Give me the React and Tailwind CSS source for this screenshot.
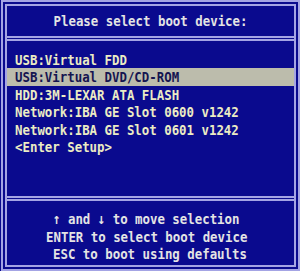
export default function App() {
  const font = { fontFamily: '"DejaVu Sans Mono", "Liberation Mono", monospace' };
  const items = [
    "USB:Virtual FDD",
    "USB:Virtual DVD/CD-ROM",
    "HDD:3M-LEXAR ATA FLASH",
    "Network:IBA GE Slot 0600 v1242",
    "Network:IBA GE Slot 0601 v1242",
    "<Enter Setup>",
  ];
  return (
    <div className="w-[300px] h-[271px] bg-[#0a0a8e] overflow-hidden" style={font}>
      <div className="ml-[1px] w-[299px] h-[271px] border-[6px] border-double border-[#a4a4e4] flex flex-col">
        <div className="h-[30px] flex items-center justify-center text-[12.4px] font-bold text-[#e4e4e4] whitespace-pre">
          <span className="inline-block scale-y-120">Please select boot device:</span>
        </div>
        <div className="h-[5px] border-t-[5px] border-double border-[#a4a4e4]" />
        <div className="h-[155px] pt-[10px] flex flex-col">
          {items.map((t, i) => (
            <div
              key={t}
              className={
                "h-[17.4px] leading-[17.4px] pl-[8px] text-[12.4px] font-bold whitespace-pre " +
                (i === 1 ? "bg-[#bcbcac] text-[#141450]" : "text-[#ececc4]")
              }
            >
              <span className="inline-block scale-y-120">{t}</span>
            </div>
          ))}
        </div>
        <div className="h-[5px] border-t-[5px] border-double border-[#a4a4e4]" />
        <div className="h-[64px] pt-[9px] flex flex-col text-[12.4px] font-bold text-[#e4e4e4] whitespace-pre">
          <div className="h-[17.5px] leading-[17.5px] pl-[46px]">
            <span className="inline-block scale-y-120">↑ and ↓ to move selection</span>
          </div>
          <div className="h-[17.5px] leading-[17.5px] pl-[39px]">
            <span className="inline-block scale-y-120">ENTER to select boot device</span>
          </div>
          <div className="h-[17.5px] leading-[17.5px] pl-[46px]">
            <span className="inline-block scale-y-120">ESC to boot using defaults</span>
          </div>
        </div>
      </div>
    </div>
  );
}
